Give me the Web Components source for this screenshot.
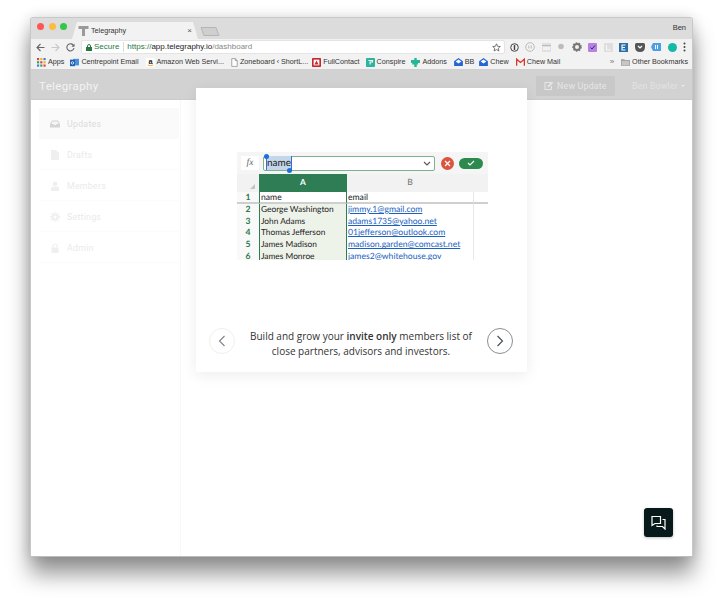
<!DOCTYPE html>
<html><head><meta charset="utf-8"><style>
html,body{margin:0;height:600px;background:#fff;overflow:hidden}
body{padding:17px 30px 0;box-sizing:border-box;font-family:"Liberation Sans",sans-serif}
</style></head><body>
<browser-window>
  <browser-chrome></browser-chrome>
  <app-header></app-header>
  <app-main></app-main>
  <onboard-card>
    <sheet-shot slot="media"></sheet-shot>
    Build and grow your <b>invite only</b> members list of<br>close partners, advisors and investors.
  </onboard-card>
  <chat-fab></chat-fab>
</browser-window>
<script>
function def(name, html){
  customElements.define(name, class extends HTMLElement{
    constructor(){super();this.attachShadow({mode:'open'}).innerHTML=html;}
  });
}
def('browser-window',`<style>
:host{display:flex;flex-direction:column;position:relative;width:663px;height:540px;box-sizing:border-box;background:#fff;
border:1px solid #c8c8c8;border-bottom:1px solid #bdbdbd;border-radius:3px 3px 0 0;
box-shadow:0 17px 22px rgba(0,0,0,.42),0 0 14px rgba(0,0,0,.14)}
</style><slot></slot>`);

const bm=(icon,label,gap)=>`<span class="bm" style="margin-right:${gap}px">${icon}<span>${label}</span></span>`;
const ico={
apps:`<svg width="9" height="9" viewBox="0 0 10 10"><g><rect width="2.4" height="2.4" fill="#d9453a"/><rect x="3.6" width="2.4" height="2.4" fill="#e8b52e"/><rect x="7.2" width="2.4" height="2.4" fill="#3a7de0"/><rect y="3.6" width="2.4" height="2.4" fill="#3a9e54"/><rect x="3.6" y="3.6" width="2.4" height="2.4" fill="#d9453a"/><rect x="7.2" y="3.6" width="2.4" height="2.4" fill="#e8b52e"/><rect y="7.2" width="2.4" height="2.4" fill="#3a7de0"/><rect x="3.6" y="7.2" width="2.4" height="2.4" fill="#3a9e54"/><rect x="7.2" y="7.2" width="2.4" height="2.4" fill="#d9453a"/></g></svg>`,
out:`<svg width="9" height="9" viewBox="0 0 11 11"><rect x="4" y="1" width="7" height="8" fill="#4c8fdc"/><rect y="2" width="6" height="8" fill="#1b5fb3"/><circle cx="3" cy="6" r="1.5" fill="none" stroke="#fff"/></svg>`,
amz:`<svg width="9" height="9" viewBox="0 0 11 11"><rect width="11" height="11" rx="1" fill="#fff"/><text x="5.5" y="7.5" font-family="Liberation Sans" font-size="9" font-weight="700" text-anchor="middle" fill="#222">a</text><path d="M2 8.500q3.500 2 7 0" stroke="#e8962e" fill="none" stroke-width="1"/></svg>`,
doc:`<svg width="7" height="9" viewBox="0 0 9 11"><path d="M1 .5h4.500L8 3v7.500H1z" fill="#fff" stroke="#777" stroke-width=".8"/><path d="M5.500.5V3H8" fill="none" stroke="#777" stroke-width=".8"/></svg>`,
fc:`<svg width="9" height="9" viewBox="0 0 11 11"><rect width="11" height="11" rx="1" fill="#c9252c"/><rect x="2" y="2" width="7" height="7" fill="#fff"/><path d="M3 8l2.500-5L8 8z" fill="#c9252c"/></svg>`,
con:`<svg width="9" height="9" viewBox="0 0 11 11"><rect width="11" height="11" rx="1" fill="#2bb5a0"/><path d="M3 3h5v2H5v3" fill="none" stroke="#fff" stroke-width="1.300"/></svg>`,
add:`<svg width="9" height="9" viewBox="0 0 11 11"><path d="M4 0h3v2.500h4V6H8.500v2H7v3H4V8H1.500V6H0V2.500h4z" fill="#28b796"/></svg>`,
mail:`<svg width="9" height="8" viewBox="0 0 11 10"><path d="M0 4L5.500 0 11 4v6H0z" fill="#2466d4"/><path d="M2 4.500L5.500 2 9 4.500 5.500 7z" fill="#fff"/></svg>`,
gm:`<svg width="9" height="8" viewBox="0 0 11 9"><path d="M.8 9V1l4.700 4 4.700-4v8" fill="none" stroke="#d8392c" stroke-width="1.600"/></svg>`,
fold:`<svg width="9" height="8" viewBox="0 0 11 9"><path d="M0 1h4l1 1h6v7H0z" fill="#9c9c9c"/><rect x=".8" y="3" width="9.400" height="5.300" fill="#c6c6c6"/></svg>`
};
def('browser-chrome',`<style>
:host{display:block;font:7.2px/1 "Liberation Sans",sans-serif;color:#222}
.tabs{height:21px;background:#dcdcdc;display:flex;align-items:flex-end;position:relative}
.dots{display:flex;gap:4.500px;padding:0 0 4px 6px;width:41px;box-sizing:border-box;height:100%;align-items:center}
.dots i{width:7px;height:7px;border-radius:50%;flex:none}
.tab{width:126px;height:17px;background:#f2f2f2;display:flex;align-items:center;box-sizing:border-box;padding:0 6px 0 6px;gap:2px;
clip-path:polygon(5px 0,calc(100% - 5px) 0,100% 100%,0 100%)}
.tab span{flex:1;color:#333}.tab em{font-style:normal;color:#555;font-size:8px}
.newtab{width:14px;height:7px;margin:0 0 3px 4px;background:#cfcfcf;border:1px solid #b5b5b5;transform:skewX(20deg);border-radius:1px}
.user{position:absolute;right:6px;top:6px;font-size:7.500px;color:#333}
.tool{height:16px;background:#f2f2f2;display:flex;align-items:center;padding-left:5px;box-sizing:border-box}
.nav{display:flex;gap:6px;align-items:center;width:45px;flex:none}
.url{width:424px;height:14px;background:#fff;border:1px solid #e4e4e4;border-radius:2px;box-sizing:border-box;display:flex;align-items:center;padding:0 3px 0 4px;font-size:8px;white-space:nowrap;gap:0;flex:none}
.sec{color:#27793f;display:flex;gap:2px;align-items:center;padding-right:4px;border-right:1px solid #dcdcdc;margin-right:3px;height:10px}
.url .h{color:#27793f}.url .d{color:#222}.url .p{color:#888}.url svg:last-child{margin-left:auto}
.ext{display:flex;align-items:center;margin-left:5px;flex:1;justify-content:space-between;padding-right:6px}
.marks{height:15px;background:#f2f2f2;border-bottom:1px solid #d0d0d0;display:flex;align-items:center;padding:0 4px 0 6px;box-sizing:border-box;white-space:nowrap}
.bm{display:flex;align-items:center;gap:2px;color:#333}
.sp{flex:1}.more{color:#777;font-size:8px;margin-right:7px}
</style>
<div class="tabs"><div class="dots"><i style="background:#fc5753"></i><i style="background:#fdbc40"></i><i style="background:#33c748"></i></div>
<div class="tab"><svg width="11" height="10" viewBox="0 0 11 10"><path d="M.5 0h10v3H7v7H4V3H.5z" fill="#9a9a9a"/></svg><span>Telegraphy</span><em>×</em></div><div class="newtab"></div><div class="user">Ben</div></div>
<div class="tool"><div class="nav">
<svg width="9" height="9" viewBox="0 0 9 9"><path d="M8.500 4.500H1M4.500 1L1 4.500 4.500 8" fill="none" stroke="#666" stroke-width="1.100"/></svg>
<svg width="9" height="9" viewBox="0 0 9 9"><path d="M.5 4.500H8M4.500 1L8 4.500 4.500 8" fill="none" stroke="#c8c8c8" stroke-width="1.100"/></svg>
<svg width="9" height="9" viewBox="0 0 9 9"><path d="M7.800 3A3.600 3.600 0 1 0 8 5" fill="none" stroke="#666" stroke-width="1.100"/><path d="M8.500.8v3h-3z" fill="#666"/></svg></div>
<div class="url"><span class="sec"><svg width="6" height="7" viewBox="0 0 6 7"><rect y="3" width="6" height="4" fill="#27793f"/><path d="M1.500 3V2a1.500 1.500 0 0 1 3 0v1" fill="none" stroke="#27793f"/></svg>Secure</span><span class="h">https://</span><span class="d">app.telegraphy.io</span><span class="p">/dashboard</span>
<svg width="9" height="9" viewBox="0 0 9 9"><path d="M4.500.8l1.100 2.500 2.700.2-2 1.800.6 2.700-2.400-1.400-2.400 1.400.6-2.700-2-1.800 2.700-.2z" fill="none" stroke="#555" stroke-width=".8"/></svg></div>
<div class="ext">
<svg width="9" height="9" viewBox="0 0 9 9"><circle cx="4.500" cy="4.500" r="3.800" fill="none" stroke="#444" stroke-width="1"/><rect x="3.800" y="2" width="1.400" height="5" fill="#444"/></svg>
<svg width="10" height="10" viewBox="0 0 10 10"><circle cx="5" cy="5" r="4.300" fill="none" stroke="#bbb"/><path d="M3.800 3.500v3M6.200 3.500v3" stroke="#bbb"/></svg>
<svg width="9" height="9" viewBox="0 0 9 9"><rect width="9" height="9" fill="#e0e0e0"/><rect y="2" width="9" height="1" fill="#bbb"/><rect x="1" y="4" width="7" height="3" fill="#f2f2f2"/></svg>
<svg width="8" height="8" viewBox="0 0 8 8"><circle cx="4" cy="3.500" r="2.800" fill="#bdbdbd"/></svg>
<svg width="10" height="10" viewBox="0 0 10 10"><circle cx="5" cy="5" r="3" fill="none" stroke="#777" stroke-width="2"/><circle cx="5" cy="5" r="4.200" fill="none" stroke="#777" stroke-width="1.200" stroke-dasharray="1.500 1.500"/></svg>
<svg width="9" height="9" viewBox="0 0 9 9"><rect width="9" height="9" rx="1" fill="#b680e8"/><path d="M2.500 4.500l1.500 1.500 3-3.500" fill="none" stroke="#333" stroke-width="1"/></svg>
<svg width="9" height="9" viewBox="0 0 9 9"><rect width="9" height="9" fill="#dedede"/><path d="M2.500 2v5h4" fill="none" stroke="#f8f8f8" stroke-width="1"/></svg>
<svg width="9" height="9" viewBox="0 0 9 9"><rect width="9" height="9" fill="#2a6fa8"/><path d="M6.500 2H3v5h3.500M3 4.500h3" fill="none" stroke="#fff" stroke-width="1.100"/></svg>
<svg width="10" height="9" viewBox="0 0 10 9"><path d="M0 1.500q0-1.500 1.500-1.500h7Q10 0 10 1.500V4Q10 9 5 9T0 4z" fill="#555"/><path d="M3 3l2 2 2-2" fill="none" stroke="#fff" stroke-width="1.200"/></svg>
<svg width="10" height="8" viewBox="0 0 10 8"><path d="M2 0h8v8H2L0 4z" fill="#4a9fe8"/><path d="M4.500 2v4M6.500 2v4" stroke="#fff"/></svg>
<svg width="9" height="9" viewBox="0 0 9 9"><circle cx="4.500" cy="4.500" r="4.500" fill="#16b8a8"/></svg>
<svg width="3" height="10" viewBox="0 0 3 10"><circle cx="1.500" cy="1.500" r="1" fill="#444"/><circle cx="1.500" cy="5" r="1" fill="#444"/><circle cx="1.500" cy="8.500" r="1" fill="#444"/></svg>
</div></div>
<div class="marks">
${bm(ico.apps,'Apps',6)}${bm(ico.out,'Centrepoint Email',7)}${bm(ico.amz,'Amazon Web Servi...',7)}${bm(ico.doc,'Zoneboard ‹ ShortL...',4)}${bm(ico.fc,'FullContact',6)}${bm(ico.con,'Conspire',6)}${bm(ico.add,'Addons',7)}${bm(ico.mail,'BB',5)}${bm(ico.mail,'Chew',7)}${bm(ico.gm,'Chew Mail',0)}
<span class="sp"></span><span class="more">»</span>${bm(ico.fold,'Other Bookmarks',0)}</div>`);

def('app-header',`<style>
:host{display:flex;align-items:center;height:30px;background:#d2d2d2;border-bottom:1px solid #cbcbcb;box-sizing:border-box;padding:2px 7px 0 8px;font-family:Roboto,sans-serif;color:#fff;flex:none}
.logo{font-size:11.500px;letter-spacing:.35px;color:#f2f2f2;flex:1}
.btn{width:79px;height:20px;background:#c8c8c8;border-radius:2px;display:flex;align-items:center;justify-content:center;gap:3px;font-size:8.800px;letter-spacing:.2px;color:#e6e6e6;margin-right:17px}
.me{font-size:8.800px;letter-spacing:.2px;color:#e2e2e2;display:flex;align-items:center;gap:3px}
.me i{border:2px solid transparent;border-top-color:#e8e8e8;margin-top:2px}
</style><span class="logo">Telegraphy</span>
<span class="btn"><svg width="10" height="9" viewBox="0 0 10 9"><path d="M7 1.500H1v7h6.500V5" fill="none" stroke="#e6e6e6" stroke-width="1.100"/><path d="M3.500 6.300l.4-1.700L8 .5 9.300 1.800 5.200 5.900z" fill="#e6e6e6"/></svg>New Update</span>
<span class="me">Ben Bowler<i></i></span>`);

def('app-main',`<style>
:host{display:flex;flex:1;min-height:0;padding-top:8px;box-sizing:border-box;background:#fff}
nav{width:140px;margin-left:8px;flex:none;display:flex;flex-direction:column}
.gut{width:1px;margin:-8px 0 0 1px;background:#f8f8f8}
</style><nav>
<nav-item active label="Updates"><svg viewBox="0 0 10 10"><path d="M0 5l2-3.500h6L10 5v3.500H0z" fill="#d4d4d4"/><path d="M1.300 5l1.200-2.500h5L8.700 5H6.500l-.5 1H4l-.5-1z" fill="#f5f5f5"/></svg></nav-item>
<nav-item label="Drafts"><svg viewBox="0 0 10 10"><path d="M1 0h5l3 3v7H1z" fill="#efefef"/></svg></nav-item>
<nav-item label="Members"><svg viewBox="0 0 10 10"><circle cx="5" cy="2.800" r="2.300" fill="#efefef"/><path d="M1 10V7.500Q1 5.500 3 5.500h4q2 0 2 2V10z" fill="#efefef"/></svg></nav-item>
<nav-item label="Settings"><svg viewBox="0 0 10 10"><circle cx="5" cy="5" r="2.500" fill="none" stroke="#efefef" stroke-width="2"/><circle cx="5" cy="5" r="4.300" fill="none" stroke="#efefef" stroke-width="1.300" stroke-dasharray="1.600 1.500"/></svg></nav-item>
<nav-item label="Admin"><svg viewBox="0 0 10 10"><rect x="1.500" y="4.500" width="7" height="5.500" fill="#efefef"/><path d="M3 4.500V3a2 2 0 0 1 4 0v1.500" fill="none" stroke="#efefef" stroke-width="1.200"/></svg></nav-item>
</nav><div class="gut"></div>`);

customElements.define('nav-item',class extends HTMLElement{
  constructor(){super();this.attachShadow({mode:'open'}).innerHTML=`<style>
:host{display:flex;align-items:center;height:31px;gap:7px;padding:2px 0 0 11px;box-sizing:border-box;font:8.800px Roboto,sans-serif;letter-spacing:.25px;color:#eaeaea;border-bottom:1px solid #fbfbfb}
:host([active]){background:#fafafa;color:#dcdcdc;border-bottom-color:transparent}
::slotted(svg){width:10px;height:10px;flex:none}
</style><slot></slot><span></span>`;
  this.shadowRoot.querySelector('span').textContent=this.getAttribute('label');}
});

def('onboard-card',`<style>
:host{position:absolute;left:165px;top:70px;width:331px;height:284px;background:#fff;box-shadow:0 3px 14px rgba(0,0,0,.08);display:flex;flex-direction:column;box-sizing:border-box}
.media{padding:64px 0 0 41px;height:239px;box-sizing:border-box;flex:none}
.row{display:flex;align-items:flex-start;padding:0 14px 0 13px;justify-content:space-between}
p{margin:2px 0 0;font:10px/15px "Open Sans",sans-serif;text-align:center;color:#333;white-space:nowrap}
::slotted(b){font-weight:600}
.c{width:26px;height:26px;margin-top:1px;border-radius:50%;box-sizing:border-box;display:flex;align-items:center;justify-content:center;flex:none}
.l{border:1px solid #efefef}.r{border:1px solid #8a8f94}
</style><div class="media"><slot name="media"></slot></div>
<div class="row"><span class="c l"><svg width="8" height="12" viewBox="0 0 8 12"><path d="M6.500 1L1.500 6l5 5" fill="none" stroke="#7b828a" stroke-width="1.100"/></svg></span>
<p><slot></slot></p>
<span class="c r"><svg width="8" height="12" viewBox="0 0 8 12"><path d="M1.500 1l5 5-5 5" fill="none" stroke="#444b52" stroke-width="1.100"/></svg></span></div>`);

const rows=[['name','email'],['George Washington','jimmy.1@gmail.com'],['John Adams','adams1735@yahoo.net'],['Thomas Jefferson','01jefferson@outlook.com'],['James Madison','madison.garden@comcast.net'],['James Monroe','james2@whitehouse.gov']];
def('sheet-shot',`<style>
:host{display:block;width:251px;height:108px;overflow:hidden;background:#f5f5f5;font:8.600px/11.800px Lato,sans-serif;color:#222;text-rendering:geometricPrecision}
.bar{height:22px;display:flex;align-items:center;padding-left:4px;position:relative}
.fx{width:18px;height:14px;background:#fff;font:italic 9.500px/14px "Liberation Serif",serif;text-align:center;color:#666}
.inp{width:172px;height:15px;margin-left:4px;background:#fff;border:1px solid #7fb08f;border-radius:2px;box-sizing:border-box;display:flex;align-items:center;position:relative;font-size:10px;padding-left:2px}
.sel{background:#c3d6ea;border-left:1px solid #2f6fd0;border-right:1px solid #2f6fd0;line-height:14px}
.h{position:absolute;width:5px;height:5px;border-radius:50%;background:#1a6fdc}
.car{margin-left:auto;margin-right:3px}
.x{width:13px;height:13px;border-radius:50%;background:#d9553b;margin-left:5.500px;display:flex;align-items:center;justify-content:center}
.ok{width:24px;height:11px;border-radius:6px;background:#2d8a4e;margin-left:5.500px;display:flex;align-items:center;justify-content:center}
.grid{display:grid;grid-template-columns:22px 88px 126px 15px;background:#fff}
.grid>*{padding-left:1px;white-space:nowrap;overflow:hidden;box-sizing:border-box}
.hd{background:#f2f2f2;color:#777;text-align:center;line-height:17px;padding:0!important;position:relative}
.hd.a{background:#2f7d55;color:#fff;font-weight:700}
.n{background:#f9f9f9;color:#2a7a48;font-weight:700;text-align:center;padding:0!important}
.a{border-left:1px solid #2f7d55;border-right:1px solid #2f7d55;background:#eef3ea;font-size:8.350px}
.a.top{background:#fff;font-size:8.600px}
.m{color:#1a62c0;text-decoration:underline}
.e{border-left:1px solid #e8e8e8}
.first{border-bottom:2px solid #cfcfcf}
.tri{position:absolute;right:4px;bottom:3px;width:0;height:0;border:solid transparent;border-width:0 0 5px 5px;border-bottom-color:#c4c4c4}
</style><div class="bar"><span class="fx">fx</span>
<div class="inp"><span class="h" style="left:0;top:-3px"></span><span class="sel">name</span><span class="h" style="left:23px;top:11px"></span>
<svg class="car" width="8" height="5" viewBox="0 0 8 5"><path d="M1 1l3 3 3-3" fill="none" stroke="#555" stroke-width="1.100"/></svg></div>
<span class="x"><svg width="7" height="7" viewBox="0 0 7 7"><path d="M1 1l5 5M6 1L1 6" stroke="#fff" stroke-width="1.200"/></svg></span>
<span class="ok"><svg width="8" height="6" viewBox="0 0 8 6"><path d="M1 3l2 2 4-4" fill="none" stroke="#fff" stroke-width="1.100"/></svg></span></div>
<div class="grid" style="grid-template-rows:18px repeat(6,11.800px)">
<span class="hd"><i class="tri"></i></span><span class="hd a">A</span><span class="hd">B</span><span class="hd"></span>
${rows.map((r,i)=>`<span class="n ${i==0?'first':''}">${i+1}</span><span class="a ${i==0?'top first':''}">${r[0]}</span><span class="${i?'m':''} ${i==0?'first':''}">${r[1]}</span><span class="e ${i==0?'first':''}"></span>`).join('')}
</div>`);

def('chat-fab',`<style>
:host{position:absolute;right:19px;bottom:19px;width:29px;height:29px;border-radius:3px;background:#07191b;box-shadow:0 1px 3px rgba(0,0,0,.25);display:flex;align-items:center;justify-content:center}
</style><svg width="15" height="15" viewBox="0 0 15 15"><path d="M1 1.500h8.500v7H4L1 10.500z" fill="none" stroke="#fff" stroke-width="1.200"/><path d="M11.500 4.500H14v9.500l-2.500-2.500H6V10.500" fill="none" stroke="#fff" stroke-width="1.200"/></svg>`);
</script>
</body></html>
